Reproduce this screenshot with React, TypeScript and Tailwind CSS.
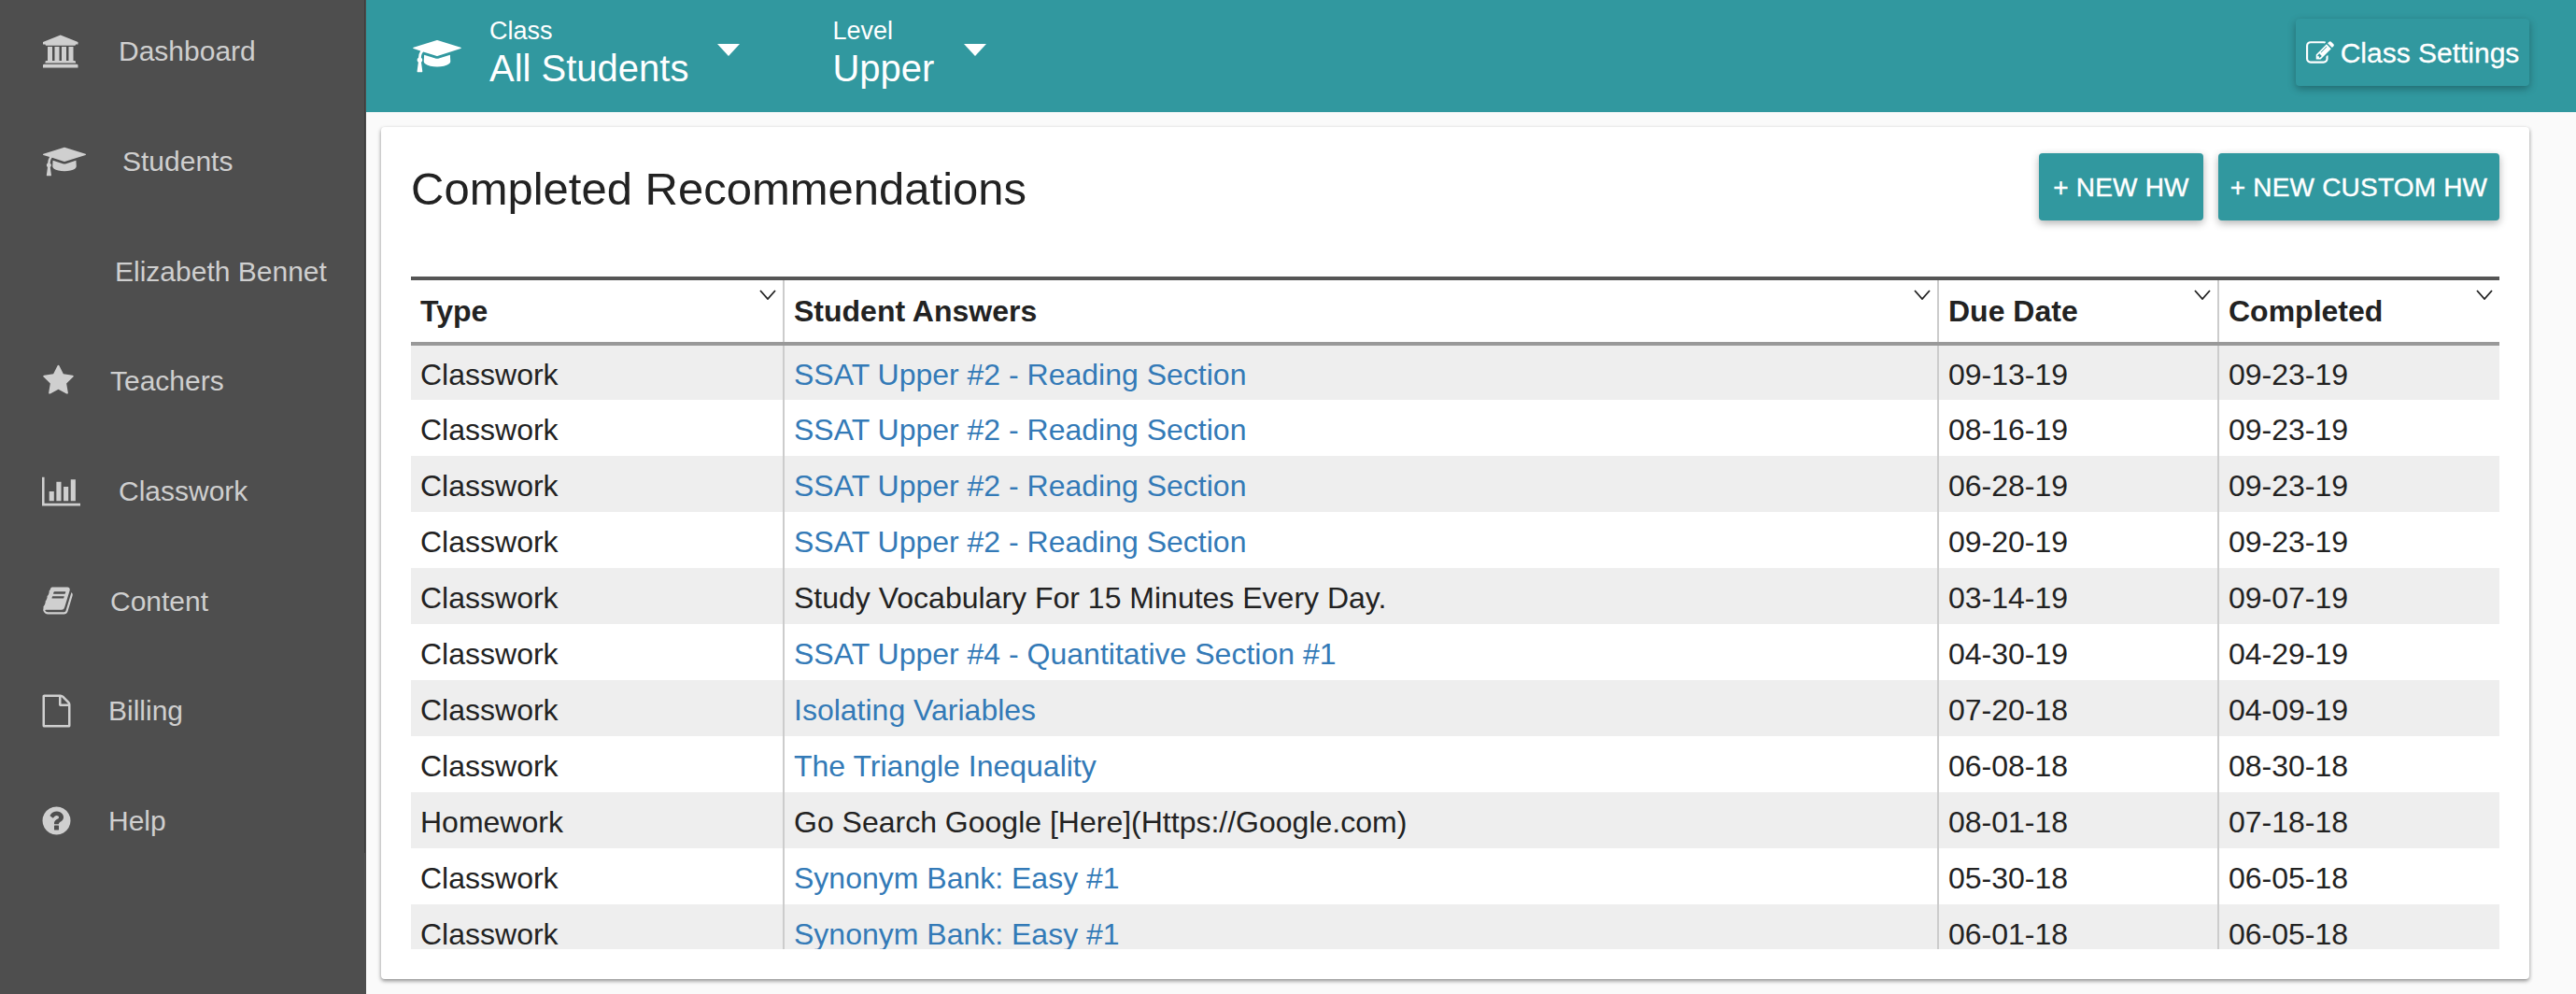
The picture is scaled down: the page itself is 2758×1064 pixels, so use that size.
const paths = {
  university: { box: "0 0 2048 1792", d: "M960 0l960 384v128h-128q0 26-20.5 45t-48.5 19h-1526q-28 0-48.5-19t-20.5-45h-128v-128zm-704 640h256v768h128v-768h256v768h128v-768h256v768h128v-768h256v768h59q28 0 48.5 19t20.5 45v64h-1664v-64q0-26 20.5-45t48.5-19h59v-768zm1595 960q28 0 48.5 19t20.5 45v128h-1920v-128q0-26 20.5-45t48.5-19h1782z" },
  cap: { box: "0 0 2304 1792", d: "M1774 836l18 316q4 69-82 128t-235 93.5-323 34.5-323-34.5-235-93.5-82-128l18-316 574 181q22 7 48 7t48-7zm530-324q0 23-22 31l-1120 352q-4 1-10 1t-10-1l-652-206q-43 34-71 111.5t-34 178.5q63 36 63 109 0 69-58 107l58 433q2 14-8 25-9 11-24 11h-192q-15 0-24-11-10-11-8-25l58-433q-58-38-58-107 0-73 65-111 11-207 98-330l-333-104q-22-8-22-31t22-31l1120-352q4-1 10-1t10 1l1120 352q22 8 22 31z" },
  star: { box: "0 0 1792 1792", d: "M1728 647q0 22-26 48l-363 354 86 500q1 7 1 20 0 21-10.5 35.5t-30.5 14.5q-19 0-40-12l-449-236-449 236q-22 12-40 12-21 0-31.5-14.5t-10.5-35.5q0-6 2-20l86-500-364-354q-25-27-25-48 0-37 56-46l502-73 225-455q19-41 49-41t49 41l225 455 502 73q56 9 56 46z" },
  chart: { box: "0 0 2048 1792", d: "M640 896v512h-256v-512h256zm384-512v1024h-256v-1024h256zm1024 1152v128h-2048v-1536h128v1408h1920zm-640-896v768h-256v-768h256zm384-384v1152h-256v-1152h256z" },
  book: { box: "0 0 1792 1792", d: "M1703 478q40 57 18 129l-275 906q-19 64-76.5 107.5t-122.5 43.5h-923q-77 0-148.5-53.5t-99.5-131.5q-24-67-2-127 0-4 3-27t4-37q1-8-3-21.5t-3-19.5q2-11 8-21t16.5-23.5 16.5-23.5q23-38 45-91.5t30-91.5q3-10 .5-30t-.5-28q3-11 17-28t17-23q21-36 42-92t25-90q1-9-2.5-32t.5-28q4-13 22-30.5t22-22.5q19-26 42.5-84.5t27.5-96.5q1-8-3-25.5t-2-26.5q2-8 9-18t18-23 17-21q8-12 16.5-30.5t15-35 16-36 19.5-32 26.5-23.5 36-11.5 47.5 5.5l-1 3q38-9 51-9h761q74 0 114 56t18 130l-274 906q-36 119-71.5 153.5t-128.5 34.5h-869q-27 0-38 15-11 16-1 43 24 70 144 70h923q29 0 56-15.5t35-41.5l300-987q7-22 5-57 38 15 59 43zm-1064 2q-4 13 2 22.5t20 9.5h608q13 0 25.5-9.5t16.5-22.5l21-64q4-13-2-22.5t-20-9.5h-608q-13 0-25.5 9.5t-16.5 22.5zm-83 256q-4 13 2 22.5t20 9.5h608q13 0 25.5-9.5t16.5-22.5l21-64q4-13-2-22.5t-20-9.5h-608q-13 0-25.5 9.5t-16.5 22.5z" },
  file: { box: "0 0 1792 1792", d: "M1596 380q28 28 48 76t20 88v1152q0 40-28 68t-68 28h-1344q-40 0-68-28t-28-68v-1600q0-40 28-68t68-28h896q40 0 88 20t76 48zm-444-244v376h376q-10-29-22-41l-313-313q-12-12-41-22zm384 1528v-1024h-416q-40 0-68-28t-28-68v-416h-768v1536h1280z" },
  help: { box: "0 0 1792 1792", d: "M1024 1376v-192q0-14-9-23t-23-9h-192q-14 0-23 9t-9 23v192q0 14 9 23t23 9h192q14 0 23-9t9-23zm256-672q0-88-55.5-163t-138.5-116-170-41q-243 0-371 213-15 24 8 42l132 100q7 6 19 6 16 0 25-12 53-68 86-92 34-24 86-24 48 0 85.5 26t37.5 59q0 38-20 61t-68 45q-63 28-115.5 86.5t-52.5 125.5v36q0 14 9 23t23 9h192q14 0 23-9t9-23q0-19 21.5-49.5t54.5-49.5q32-18 49-28.5t46-35 44.5-48 28-60.5 12.5-81zm384 192q0 209-103 385.5t-279.5 279.5-385.5 103-385.5-103-279.5-279.5-103-385.5 103-385.5 279.5-279.5 385.5-103 385.5 103 279.5 279.5 103 385.5z" },
  edit: { box: "0 0 1792 1792", d: "M888 1184l116-116-152-152-116 116v56h96v96h56zm440-720q-16-16-33 1l-350 350q-17 17-1 33t33-1l350-350q17-17 1-33zm80 594v190q0 119-84.5 203.5t-203.5 84.5h-832q-119 0-203.5-84.5t-84.5-203.5v-832q0-119 84.5-203.5t203.5-84.5h832q63 0 117 25 15 7 18 23 3 17-9 29l-49 49q-14 14-32 8-23-6-45-6h-832q-66 0-113 47t-47 113v832q0 66 47 113t113 47h832q66 0 113-47t47-113v-126q0-13 9-22l64-64q15-15 35-7t20 29zm-96-738l288 288-672 672h-288v-288zm444 132l-92 92-288-288 92-92q28-28 68-28t68 28l152 152q28 28 28 68t-28 68z" },
};

function Icon({ name, className }: { name: keyof typeof paths; className: string }) {
  const p = paths[name];
  return (
    <svg viewBox={p.box} className={className} fill="currentColor">
      <path d={p.d} />
    </svg>
  );
}

const nav = [
  { label: "Dashboard", icon: "university", size: "w-[40px] h-[38px]", slot: "w-[81px]" },
  { label: "Students", icon: "cap", size: "w-[46px] h-[36px]", slot: "w-[85px]" },
  { label: "Elizabeth Bennet", icon: null, size: "", slot: "w-[77px]" },
  { label: "Teachers", icon: "star", size: "w-[35px] h-[35px] -ml-[1px]", slot: "w-[72px]" },
  { label: "Classwork", icon: "chart", size: "w-[41px] h-[36px] -ml-[1px]", slot: "w-[81px]" },
  { label: "Content", icon: "book", size: "w-[34px] h-[34px] -ml-[1px]", slot: "w-[72px]" },
  { label: "Billing", icon: "file", size: "w-[35px] h-[36px] -ml-[3px]", slot: "w-[70px]" },
  { label: "Help", icon: "help", size: "w-[35px] h-[35px] -ml-[3px]", slot: "w-[70px]" },
] as const;

const rows = [
  ["Classwork", "SSAT Upper #2 - Reading Section", "09-13-19", "09-23-19", true],
  ["Classwork", "SSAT Upper #2 - Reading Section", "08-16-19", "09-23-19", true],
  ["Classwork", "SSAT Upper #2 - Reading Section", "06-28-19", "09-23-19", true],
  ["Classwork", "SSAT Upper #2 - Reading Section", "09-20-19", "09-23-19", true],
  ["Classwork", "Study Vocabulary For 15 Minutes Every Day.", "03-14-19", "09-07-19", false],
  ["Classwork", "SSAT Upper #4 - Quantitative Section #1", "04-30-19", "04-29-19", true],
  ["Classwork", "Isolating Variables", "07-20-18", "04-09-19", true],
  ["Classwork", "The Triangle Inequality", "06-08-18", "08-30-18", true],
  ["Homework", "Go Search Google [Here](Https://Google.com)", "08-01-18", "07-18-18", false],
  ["Classwork", "Synonym Bank: Easy #1", "05-30-18", "06-05-18", true],
  ["Classwork", "Synonym Bank: Easy #1", "06-01-18", "06-05-18", true],
] as const;

const columns = [
  { title: "Type", width: "w-[399px]" },
  { title: "Student Answers", width: "w-[1236px]" },
  { title: "Due Date", width: "w-[300px]" },
  { title: "Completed", width: "w-[301px]" },
];

function Caret({ className }: { className: string }) {
  return <span className={`${className} mt-[-13px] w-0 h-0 border-x-[12px] border-x-transparent border-t-[13px] border-t-white`} />;
}

function Chevron() {
  return (
    <svg viewBox="0 0 18 11" className="absolute right-[7px] top-[10px] w-[18px] h-[11px] text-[#222]" fill="none" stroke="currentColor" strokeWidth="1.8">
      <path d="M1 1l8 9 8-9" />
    </svg>
  );
}

export default function App() {
  return (
    <div className="flex h-[1064px] w-[2758px] overflow-hidden bg-[#fafafa] font-['Liberation_Sans',sans-serif]">
      <aside className="w-[392px] shrink-0 bg-[#4e4e4e] text-[#cfcfcf]">
        <div className="h-[917px] w-[391px] border-r border-[#3c3c3c]">
          <nav className="flex flex-col -mt-[4px] pl-[46px] text-[30px]">
            {nav.map((item) => (
              <div key={item.label} className="flex items-center h-[117.7px]">
                <div className={`${item.slot} shrink-0`}>
                  {item.icon && <Icon name={item.icon} className={item.size} />}
                </div>
                <span>{item.label}</span>
              </div>
            ))}
          </nav>
        </div>
      </aside>

      <div className="flex-1 min-w-0 flex flex-col">
        <header className="h-[120px] shrink-0 bg-[#31989f] text-white flex items-center pl-[50px] pr-[50px]">
          <Icon name="cap" className="w-[52px] h-[40px] mr-[30px]" />
          <div className="flex items-center">
            <div className="-mt-[9px]">
              <div className="text-[27px] leading-[34px]">Class</div>
              <div className="text-[40px] leading-[46px]">All Students</div>
            </div>
            <Caret className="ml-[31px]" />
          </div>
          <div className="flex items-center ml-[99px]">
            <div className="-mt-[9px]">
              <div className="text-[27px] leading-[34px]">Level</div>
              <div className="text-[40px] leading-[46px]">Upper</div>
            </div>
            <Caret className="ml-[32px]" />
          </div>
          <button className="ml-auto h-[72px] -mt-[8px] w-[250px] rounded-[4px] bg-[#31989f] shadow-[0_3px_8px_rgba(0,0,0,0.3)] flex items-center justify-center gap-[7px] text-[30px] pt-[1px] [-webkit-text-stroke:0.3px_white]">
            <Icon name="edit" className="w-[30px] h-[30px]" />
            Class Settings
          </button>
        </header>

        <main className="flex-1 pt-[16px] pl-[16px] pr-[50px] pb-[16px]">
          <div className="h-[912px] rounded-[4px] bg-white shadow-[0_2px_4px_rgba(0,0,0,0.45)] px-[32px]">
            <div className="flex h-[160px] items-start justify-between pt-[28px]">
              <h1 className="text-[49px] leading-[72px] pt-[2px] text-[#222]">Completed Recommendations</h1>
              <div className="flex gap-[16px]">
                <button className="h-[72px] w-[176px] rounded-[4px] bg-[#31989f] text-white text-[28px] tracking-[0.2px] pt-[1px] [-webkit-text-stroke:0.4px_white] shadow-[0_3px_8px_rgba(0,0,0,0.3)]">+ NEW HW</button>
                <button className="h-[72px] w-[301px] rounded-[4px] bg-[#31989f] text-white text-[28px] tracking-[0.2px] pt-[1px] [-webkit-text-stroke:0.4px_white] shadow-[0_3px_8px_rgba(0,0,0,0.3)]">+ NEW CUSTOM HW</button>
              </div>
            </div>
            <div className="h-[720px] overflow-hidden">
              <table className="w-[2236px] table-fixed border-collapse text-[32px] text-[#222]">
                <thead>
                  <tr className="h-[70px] border-t-[4px] border-b-[4px] border-t-[#555] border-b-[#999]">
                    {columns.map((c, i) => (
                      <th key={c.title} className={`${c.width} relative text-left font-bold px-[10px] ${i < 3 ? "border-r-2 border-[#ccc]" : ""}`}>
                        {c.title}
                        <Chevron />
                      </th>
                    ))}
                  </tr>
                </thead>
                <tbody>
                  {rows.map((r, i) => (
                    <tr key={i} className={`h-[60px] ${i % 2 === 0 ? "bg-[#eee]" : ""}`}>
                      <td className="px-[10px] pt-[4px] border-r-2 border-[#ccc]">{r[0]}</td>
                      <td className={`px-[10px] pt-[4px] border-r-2 border-[#ccc] ${r[4] ? "text-[#337ab7]" : ""}`}>{r[1]}</td>
                      <td className="px-[10px] pt-[4px] border-r-2 border-[#ccc]">{r[2]}</td>
                      <td className="px-[10px] pt-[4px]">{r[3]}</td>
                    </tr>
                  ))}
                </tbody>
              </table>
            </div>
          </div>
        </main>
      </div>
    </div>
  );
}
